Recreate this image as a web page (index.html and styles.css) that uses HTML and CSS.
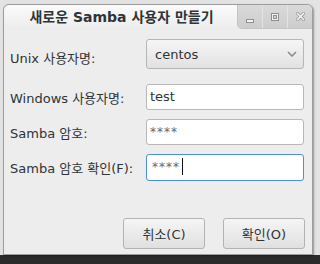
FILE: index.html
```html
<!DOCTYPE html>
<html lang="ko">
<head>
    <meta charset="UTF-8">
    <title>새로운 Samba 사용자 만들기</title>
    <link rel="stylesheet" href="styles.css">
</head>
<body>
    <div class="desktop">
        <div class="window">
            <div class="titlebar">
                <div class="title">새로운 Samba 사용자 만들기</div>
                <div class="wm-buttons">
                    <div class="wm-btn"><span class="icon-min"></span></div>
                    <div class="wm-btn"><span class="icon-max"></span></div>
                    <div class="wm-btn">
                        <svg width="9" height="9" viewBox="0 0 9 9">
                            <path d="M1.5 1.5 L7.5 7.5 M7.5 1.5 L1.5 7.5" stroke="#8a8a8a" stroke-width="3" stroke-linecap="square"/>
                            <path d="M1.5 1.5 L7.5 7.5 M7.5 1.5 L1.5 7.5" stroke="#f4f4f4" stroke-width="1.6" stroke-linecap="square"/>
                        </svg>
                    </div>
                </div>
            </div>
            <div class="content">
                <div class="form">
                    <label class="label">Unix 사용자명:</label>
                    <div class="combo">
                        <span>centos</span>
                        <svg width="10" height="6" viewBox="0 0 10 6">
                            <path d="M1 1 L5 5 L9 1" fill="none" stroke="#8b8e8f" stroke-width="1.6"/>
                        </svg>
                    </div>

                    <label class="label">Windows 사용자명:</label>
                    <div class="entry">test</div>

                    <label class="label">Samba 암호:</label>
                    <div class="entry stars">****</div>

                    <label class="label">Samba 암호 확인(F):</label>
                    <div class="entry stars focus">****<span class="caret"></span></div>
                </div>
                <div class="actions">
                    <button type="button">취소(C)</button>
                    <button type="button">확인(O)</button>
                </div>
            </div>
        </div>
    </div>
</body>
</html>
```

FILE: styles.css
```css
body {
    margin: 0;
    font-family: "DejaVu Sans", "Noto Sans CJK KR", sans-serif;
    color: #2e3436;
}

.desktop {
    width: 320px;
    height: 264px;
    padding: 4px 0 0 3px;
    box-sizing: border-box;
    background: linear-gradient(to bottom, #e3e3e3 0, #e3e3e3 255px, #2b2b2b 255px);
    overflow: hidden;
}

.window {
    width: 310px;
    height: 251px;
    box-sizing: border-box;
    border: 1px solid #9d9d9d;
    border-radius: 6px 6px 0 0;
    background: #ededed;
    display: flex;
    flex-direction: column;
    box-shadow: 1px 1px 2px rgba(0, 0, 0, 0.35);
}

.titlebar {
    height: 24px;
    display: flex;
    border-radius: 6px 6px 0 0;
    background: linear-gradient(to bottom, #fbfbfb, #ececec);
}

.title {
    flex: 1;
    text-align: center;
    font-size: 14px;
    font-weight: bold;
    line-height: 24px;
    padding-left: 2px;
}

.wm-buttons {
    display: flex;
    height: 23px;
    border-radius: 0 5px 0 5px;
    background: linear-gradient(to bottom, #dadada, #cdcdcd);
    border-bottom: 1px solid #c4c4c4;
    border-left: 1px solid #c4c4c4;
}

.wm-btn {
    width: 24px;
    display: flex;
    align-items: center;
    justify-content: center;
    border-left: 1px solid #e4e4e4;
}

.wm-btn:first-child {
    border-left: none;
}

.icon-min {
    width: 6px;
    height: 2px;
    margin-top: 9px;
    background: #f4f4f4;
    outline: 1px solid #8e8e8e;
}

.icon-max {
    width: 4px;
    height: 4px;
    border: 1px solid #f4f4f4;
    outline: 1px solid #8e8e8e;
    box-shadow: inset 0 0 0 1px #8e8e8e;
    margin-top: 1px;
}

.content {
    flex: 1;
    padding: 10px 7px 5px 6px;
    display: flex;
    flex-direction: column;
    justify-content: space-between;
}

.form {
    display: grid;
    grid-template-columns: 136px 158px;
    row-gap: 9px;
    align-items: center;
}

.label {
    font-size: 13px;
}

.combo {
    height: 30px;
    box-sizing: border-box;
    border: 1px solid #b6b6b6;
    border-radius: 3px;
    background: linear-gradient(to bottom, #f6f6f6, #e1e1e1);
    display: flex;
    align-items: center;
    justify-content: space-between;
    padding: 0 6px 0 8px;
    font-size: 13px;
    margin-bottom: 6px;
}

.entry {
    height: 26px;
    box-sizing: border-box;
    border: 1px solid #b8b8b8;
    border-radius: 3px;
    background: #fff;
    padding: 0 3px;
    font-size: 13px;
    line-height: 24px;
}

.stars {
    color: #666;
    font-size: 12px;
    letter-spacing: 1px;
}

.focus {
    height: 27px;
    border-color: #4a90d9;
    padding-left: 5px;
}

.caret {
    display: inline-block;
    width: 1px;
    height: 17px;
    background: #111;
    vertical-align: -4px;
    margin-left: 2px;
}

.actions {
    display: flex;
    justify-content: flex-end;
    gap: 18px;
}

button {
    width: 82px;
    height: 31px;
    border: 1px solid #b3b3b3;
    border-radius: 3px;
    background: linear-gradient(to bottom, #f5f5f5, #e0e0e0);
    font-family: inherit;
    font-size: 13px;
    color: #2e3436;
}
```
